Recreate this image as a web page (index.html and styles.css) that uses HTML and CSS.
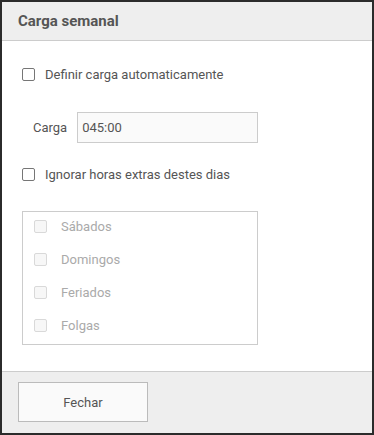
FILE: index.html
```html
<!DOCTYPE html>
<html lang="pt">
<head>
<meta charset="UTF-8">
<title>Carga semanal</title>
<link rel="stylesheet" href="styles.css">
</head>
<body>
<div class="dialog">
  <div class="dialog-header">Carga semanal</div>
  <div class="dialog-body">
    <label class="check-row">
      <input type="checkbox" class="check">
      <span>Definir carga automaticamente</span>
    </label>
    <div class="field-row">
      <span class="field-label">Carga</span>
      <input type="text" class="field-input" value="045:00">
    </div>
    <label class="check-row">
      <input type="checkbox" class="check">
      <span>Ignorar horas extras destes dias</span>
    </label>
    <div class="days-box">
      <label class="day-row"><input type="checkbox" class="check" disabled><span>Sábados</span></label>
      <label class="day-row"><input type="checkbox" class="check" disabled><span>Domingos</span></label>
      <label class="day-row"><input type="checkbox" class="check" disabled><span>Feriados</span></label>
      <label class="day-row"><input type="checkbox" class="check" disabled><span>Folgas</span></label>
    </div>
  </div>
  <div class="dialog-footer">
    <button class="btn">Fechar</button>
  </div>
</div>
</body>
</html>
```

FILE: styles.css
```css
/* Page */
html, body {
  margin: 0;
  padding: 0;
}
body {
  font-family: Roboto, "Liberation Sans", sans-serif;
  font-size: 13px;
  color: #555;
}
/* Dialog frame */
.dialog {
  box-sizing: border-box;
  width: 374px;
  height: 435px;
  border: 2px solid #2b2b2b;
  background: #fff;
  display: flex;
  flex-direction: column;
}
.dialog-header {
  height: 38px;
  background: #eee;
  border-bottom: 1px solid #ccc;
  padding-left: 16px;
  display: flex;
  align-items: center;
  font-weight: bold;
  font-size: 15px;
  color: #555;
}
.dialog-body {
  flex: 1;
  padding: 26px 0 0 20px;
}
.dialog-footer {
  height: 62px;
  background: #eee;
  border-top: 1px solid #ccc;
  padding: 10px 0 0 16px;
  box-sizing: border-box;
}
/* Checkboxes */
.check {
  appearance: none;
  -webkit-appearance: none;
  box-sizing: border-box;
  width: 13px;
  height: 13px;
  margin: 0;
  border: 1px solid #767676;
  border-radius: 2px;
  background: #fff;
}
.check:disabled {
  border-color: #d9d9d9;
  background: #f7f7f7;
}
.check-row {
  display: flex;
  align-items: center;
  gap: 10px;
  height: 14px;
}
/* Carga field */
.field-row {
  display: flex;
  align-items: center;
  gap: 10px;
  margin: 31px 0 24px 11px;
}
.field-input {
  box-sizing: border-box;
  width: 181px;
  height: 31px;
  border: 1px solid #ccc;
  background: #fafafa;
  padding: 0 4px;
  font-family: inherit;
  font-size: 13px;
  color: #555;
  outline: none;
}
/* Days */
.days-box {
  box-sizing: border-box;
  width: 236px;
  height: 134px;
  margin-top: 30px;
  border: 1px solid #ccc;
  padding: 7px 0 0 11px;
  display: flex;
  flex-direction: column;
  gap: 19px;
}
.day-row {
  display: flex;
  align-items: center;
  gap: 14px;
  height: 14px;
  color: #aaa;
}
/* Button */
.btn {
  width: 130px;
  height: 40px;
  border: 1px solid #bbb;
  background: #fafafa;
  font-family: inherit;
  font-size: 13px;
  color: #555;
}
```
